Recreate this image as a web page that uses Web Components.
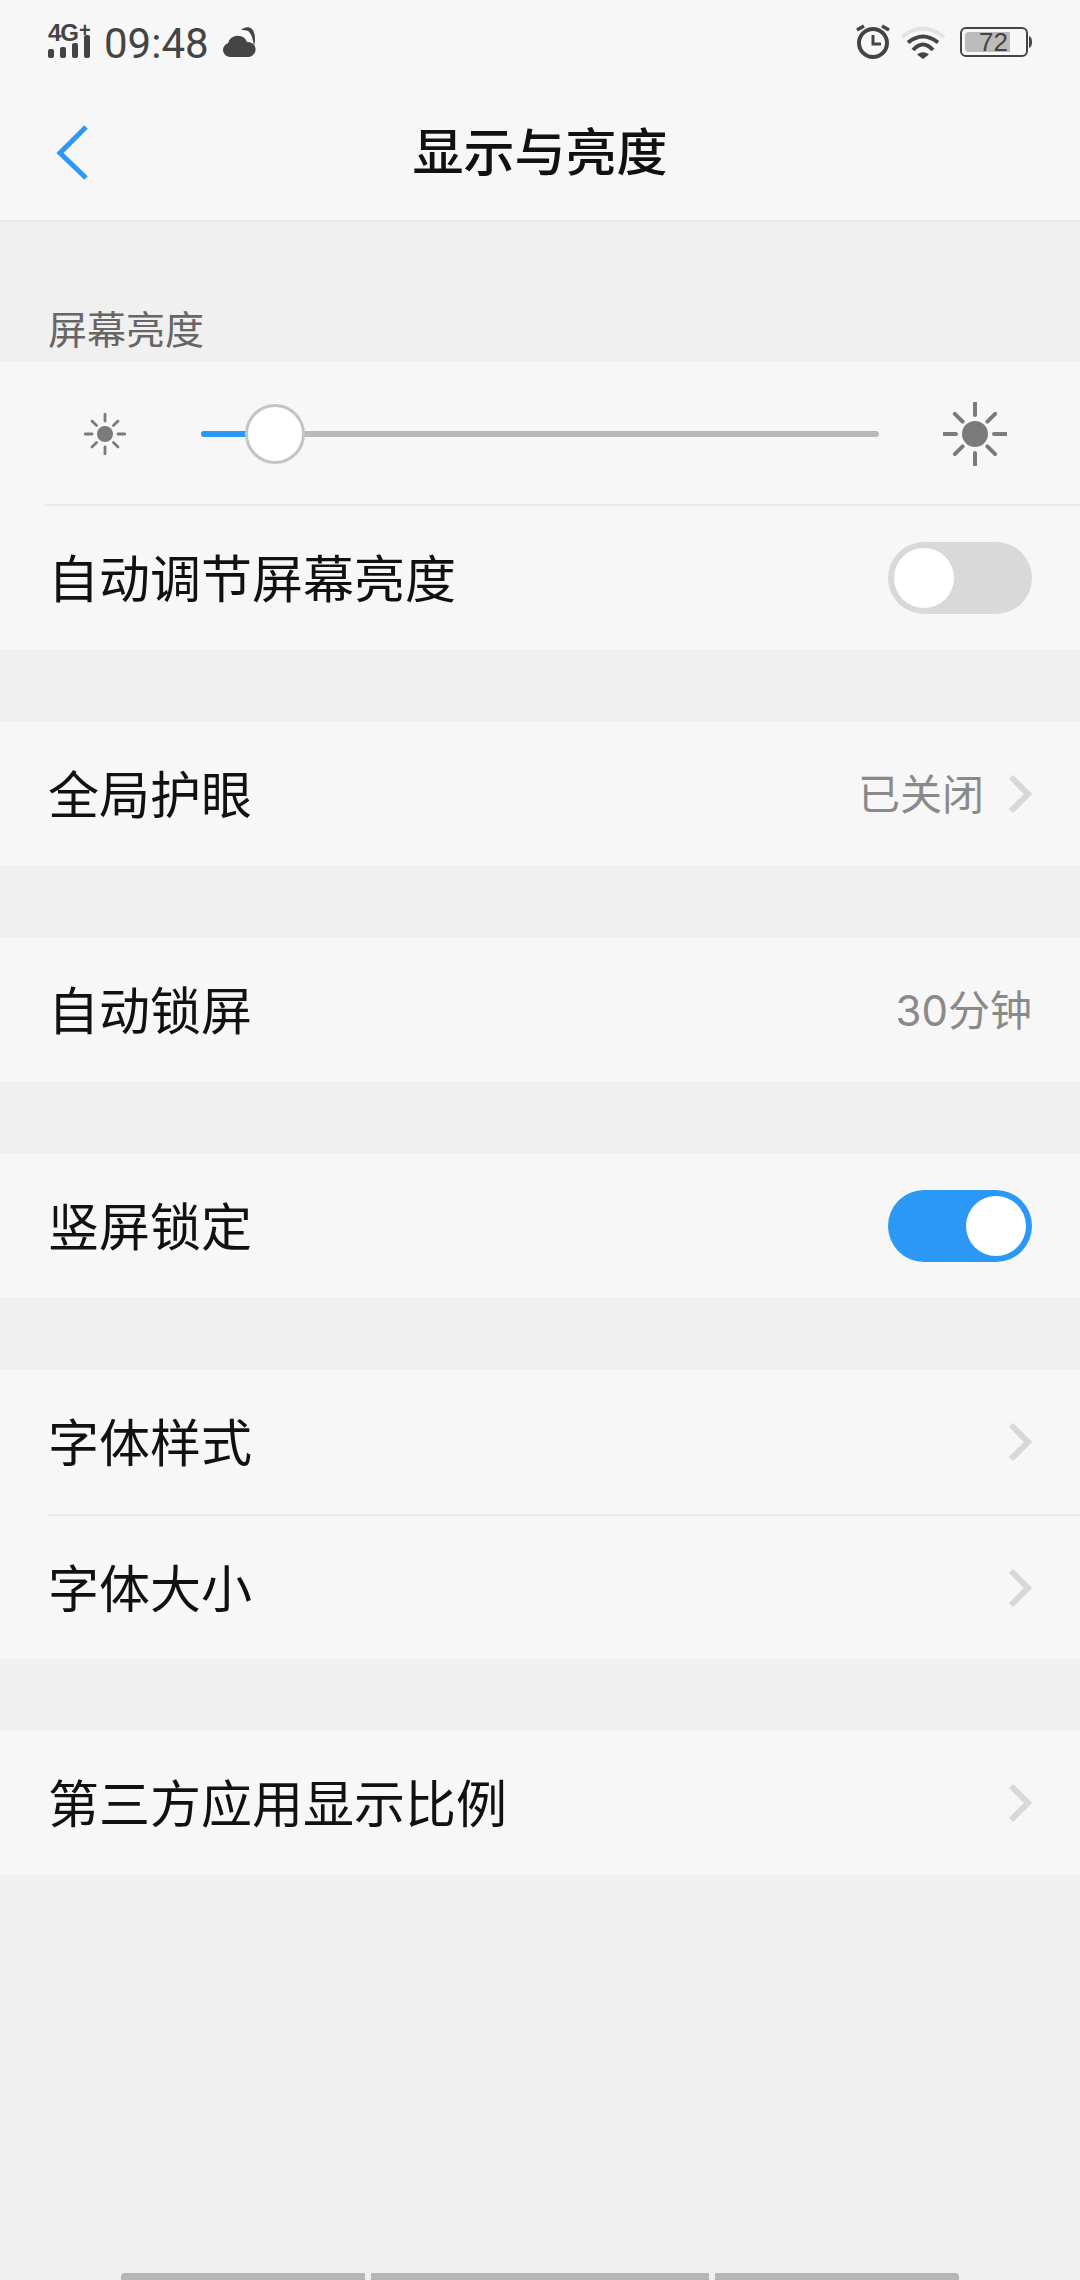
<!DOCTYPE html>
<html lang="zh-CN">
<head>
<meta charset="utf-8">
<title>显示与亮度</title>
<style>
html, body { margin: 0; padding: 0; background: #f0f0f0; }
body {
    width: 1080px;
    height: 2280px;
    overflow: hidden;
    display: flex;
    flex-direction: column;
    font-family: "Noto Sans CJK SC", "Noto Sans", sans-serif;
}
</style>
</head>
<body>
<settings-header></settings-header>
<section-label>屏幕亮度</section-label>
<setting-group>
    <brightness-slider></brightness-slider>
    <setting-row label="自动调节屏幕亮度" divider style="--line-left: 45px"><toggle-switch></toggle-switch></setting-row>
</setting-group>
<setting-group gap>
    <setting-row label="全局护眼" value="已关闭" chevron></setting-row>
</setting-group>
<setting-group gap>
    <setting-row label="自动锁屏" value="30分钟"></setting-row>
</setting-group>
<setting-group gap>
    <setting-row label="竖屏锁定"><toggle-switch on></toggle-switch></setting-row>
</setting-group>
<setting-group gap>
    <setting-row label="字体样式" chevron></setting-row>
    <setting-row label="字体大小" chevron divider style="--row-height: 143px"></setting-row>
</setting-group>
<setting-group gap>
    <setting-row label="第三方应用显示比例" chevron></setting-row>
</setting-group>
<home-indicator></home-indicator>

<script>
class SettingsHeader extends HTMLElement {
    constructor() {
        super();
        this.attachShadow({mode: 'open'});
        this.shadowRoot.innerHTML = `
            <style>
            :host { display: block; background: #f7f7f7; border-bottom: 2px solid #ebebeb; height: 220px; box-sizing: content-box; }
            .status { height: 84px; padding: 22px 48px 0 48px; box-sizing: border-box; display: flex; align-items: flex-start; color: #444; }
            .net { position: relative; width: 44px; height: 37px; margin-top: 1px; }
            .net span { position: absolute; left: 0; top: -2px; font: bold 24px/24px "Liberation Sans", sans-serif; letter-spacing: -1px; white-space: nowrap; }
            .net b { font-size: 20px; position: relative; top: -4px; left: 1px; }
            .net svg { position: absolute; left: 0; top: 0; }
            .time { font: 42px/44px Roboto, "Liberation Sans", sans-serif; margin-left: 12px; margin-top: 0; }
            .cloud { margin-left: 14px; margin-top: 5px; }
            .right { margin-left: auto; display: flex; align-items: flex-start; }
            .alarm { margin-top: 1px; }
            .wifi { margin-left: 10px; margin-top: 4px; }
            .batt { position: relative; width: 72px; height: 32px; margin-left: 15px; margin-top: 5px; }
            .batt span { position: absolute; left: 19px; top: 0; font: 26px/30px "Liberation Sans", sans-serif; color: #444; }
            .nav { height: 136px; position: relative; display: flex; align-items: center; justify-content: center; }
            .nav svg { position: absolute; left: 0; top: 0; }
            h1 { margin: 0 0 6px; font: 500 51px/60px "Noto Sans CJK SC", sans-serif; color: #111; }
            </style>
            <div class="status">
                <div class="net">
                    <span>4G<b>+</b></span>
                    <svg width="44" height="37" viewBox="0 0 44 37" fill="#444">
                        <rect x="0" y="26" width="6" height="9" rx="2"/>
                        <rect x="12" y="24" width="6" height="11" rx="2"/>
                        <rect x="24" y="20" width="6" height="15" rx="2"/>
                        <rect x="36" y="12" width="6" height="23" rx="2"/>
                    </svg>
                </div>
                <div class="time">09:48</div>
                <svg class="cloud" width="34" height="32" viewBox="0 0 34 32" fill="#444">
                    <path d="M18 3C21 0 26-1 29 2C32 5 33 13 31 19C30 13 29 7 25 4C23 3 20 3 18 3z"/>
                    <path d="M7 30a7 7 0 0 1-2-13.700a10 10 0 0 1 19-1.300a7.500 7.500 0 0 1 2 15z"/>
                </svg>
                <div class="right">
                    <svg class="alarm" width="36" height="36" viewBox="0 0 36 36" fill="none" stroke="#444">
                        <circle cx="18" cy="20" r="14" stroke-width="4"/>
                        <path d="M18 12v9h8" stroke-width="3"/>
                        <path d="M2 7l7-4M34 7l-7-4" stroke-width="3.500"/>
                    </svg>
                    <svg class="wifi" width="44" height="34" viewBox="0 0 44 34" fill="none">
                        <path d="M1 11Q22-6 43 11" stroke="#e2e2e2" stroke-width="4"/>
                        <path d="M7 16.500Q22 4.500 37 16.500" stroke="#444" stroke-width="4"/>
                        <path d="M12 24Q22 13 32 24" stroke="#444" stroke-width="4"/>
                        <path d="M16 28.500Q22 24 28 28.500L22 33z" fill="#444"/>
                    </svg>
                    <div class="batt">
                        <svg width="72" height="32" viewBox="0 0 72 32" fill="none">
                            <rect x="1" y="1" width="66" height="28" rx="5" stroke="#444" stroke-width="2"/>
                            <path d="M5 9a4 4 0 0 1 4-4h41v20H9a4 4 0 0 1-4-4z" fill="#bbb"/>
                            <path d="M69 9q3 1 3 6t-3 6z" fill="#444"/>
                        </svg>
                        <span>72</span>
                    </div>
                </div>
            </div>
            <div class="nav">
                <svg width="100" height="136" viewBox="0 0 100 136" fill="none">
                    <path d="M86 43L60 69l26 25" stroke="#2b98f6" stroke-width="5"/>
                </svg>
                <h1>显示与亮度</h1>
            </div>
        `;
    }
}

class SectionLabel extends HTMLElement {
    constructor() {
        super();
        this.attachShadow({mode: 'open'});
        this.shadowRoot.innerHTML = `
            <style>
            :host { display: block; height: 140px; box-sizing: border-box; padding: 79px 0 0 48px; font-size: 39px; line-height: 52px; color: #666; }
            </style>
            <slot></slot>
        `;
    }
}

class SettingGroup extends HTMLElement {
    constructor() {
        super();
        this.attachShadow({mode: 'open'});
        this.shadowRoot.innerHTML = `
            <style>
            :host { display: block; background: #f7f7f7; }
            :host([gap]) { margin-top: 72px; }
            </style>
            <slot></slot>
        `;
    }
}

class SettingRow extends HTMLElement {
    constructor() {
        super();
        this.attachShadow({mode: 'open'});
        const value = this.getAttribute('value');
        const chevron = this.hasAttribute('chevron');
        this.shadowRoot.innerHTML = `
            <style>
            :host { display: block; }
            :host([divider]) .line { display: block; }
            .line { display: none; height: 2px; margin-left: var(--line-left, 48px); background: #ebebeb; }
            .row { height: var(--row-height, 144px); padding: 0 48px 0 48px; box-sizing: border-box; display: flex; align-items: center; }
            .label { font-size: 51px; line-height: 60px; color: #111; margin-bottom: 4px; }
            .right { margin-left: auto; display: flex; align-items: center; }
            .value { font-family: Inter, "Noto Sans CJK SC", sans-serif; font-size: 42px; line-height: 50px; color: #8a8a8a; margin-top: 2px; }
            svg { margin-left: 24px; display: block; }
            </style>
            <div class="line"></div>
            <div class="row">
                <span class="label">${this.getAttribute('label')}</span>
                <div class="right">
                    ${value ? `<span class="value">${value}</span>` : ''}
                    ${chevron ? `<svg width="24" height="40" viewBox="0 0 24 40" fill="none"><path d="M3 3l17 17L3 37" stroke="#d8d8d8" stroke-width="6"/></svg>` : ''}
                    <slot></slot>
                </div>
            </div>
        `;
    }
}

class ToggleSwitch extends HTMLElement {
    constructor() {
        super();
        this.attachShadow({mode: 'open'});
        this.shadowRoot.innerHTML = `
            <style>
            :host { display: flex; width: 144px; height: 72px; padding: 6px; box-sizing: border-box; border-radius: 36px; background: #d9d9d9; }
            :host([on]) { background: #2b98f6; justify-content: flex-end; }
            .knob { width: 60px; height: 60px; border-radius: 50%; background: #fff; }
            </style>
            <div class="knob"></div>
        `;
    }
}

class SunIcon extends HTMLElement {
    constructor() {
        super();
        this.attachShadow({mode: 'open'});
        const big = this.hasAttribute('big');
        // rays are the same 8 spokes, only the radii change
        const size = big ? 64 : 42;
        const c = size / 2;
        const r = big ? 13 : 8;
        const inner = big ? 19 : 13;
        const outer = big ? 31 : 20;
        const w = big ? 4 : 2.8;
        let rays = '';
        for (let i = 0; i < 8; i++) {
            const a = i * Math.PI / 4;
            const shrink = i % 2 ? 0.92 : 1;
            rays += `<line x1="${c + inner * shrink * Math.cos(a)}" y1="${c + inner * shrink * Math.sin(a)}" x2="${c + outer * shrink * Math.cos(a)}" y2="${c + outer * shrink * Math.sin(a)}"/>`;
        }
        this.shadowRoot.innerHTML = `
            <style>
            :host { display: block; width: ${size}px; height: ${size}px; }
            svg { display: block; }
            </style>
            <svg width="${size}" height="${size}" viewBox="0 0 ${size} ${size}">
                <circle cx="${c}" cy="${c}" r="${r}" fill="#7b7b7b"/>
                <g stroke="#7b7b7b" stroke-width="${w}" stroke-linecap="round">${rays}</g>
            </svg>
        `;
    }
}

class BrightnessSlider extends HTMLElement {
    constructor() {
        super();
        this.attachShadow({mode: 'open'});
        this.shadowRoot.innerHTML = `
            <style>
            :host { display: flex; align-items: center; height: 142px; padding: 2px 0 0 84px; box-sizing: border-box; }
            .track { position: relative; width: 678px; height: 6px; margin-left: 75px; border-radius: 3px; background: #b9b9b9; }
            .fill { position: absolute; left: 0; top: 0; bottom: 0; width: 60px; border-radius: 3px 0 0 3px; background: #2b98f6; }
            .thumb { position: absolute; left: 44px; top: -27px; width: 60px; height: 60px; box-sizing: border-box; border: 3px solid #c4c4c4; border-radius: 50%; background: #fff; }
            sun-icon[big] { margin-left: 64px; }
            </style>
            <sun-icon></sun-icon>
            <div class="track"><div class="fill"></div><div class="thumb"></div></div>
            <sun-icon big></sun-icon>
        `;
    }
}

class HomeIndicator extends HTMLElement {
    constructor() {
        super();
        this.attachShadow({mode: 'open'});
        this.shadowRoot.innerHTML = `
            <style>
            :host { display: flex; gap: 6px; justify-content: center; margin-top: auto; height: 7px; }
            div { background: #b6b6b6; }
            .a { width: 244px; border-radius: 4px 0 0 0; }
            .b { width: 338px; }
            .c { width: 244px; border-radius: 0 4px 0 0; }
            </style>
            <div class="a"></div><div class="b"></div><div class="c"></div>
        `;
    }
}

customElements.define('settings-header', SettingsHeader);
customElements.define('section-label', SectionLabel);
customElements.define('setting-group', SettingGroup);
customElements.define('setting-row', SettingRow);
customElements.define('toggle-switch', ToggleSwitch);
customElements.define('sun-icon', SunIcon);
customElements.define('brightness-slider', BrightnessSlider);
customElements.define('home-indicator', HomeIndicator);
</script>
</body>
</html>
